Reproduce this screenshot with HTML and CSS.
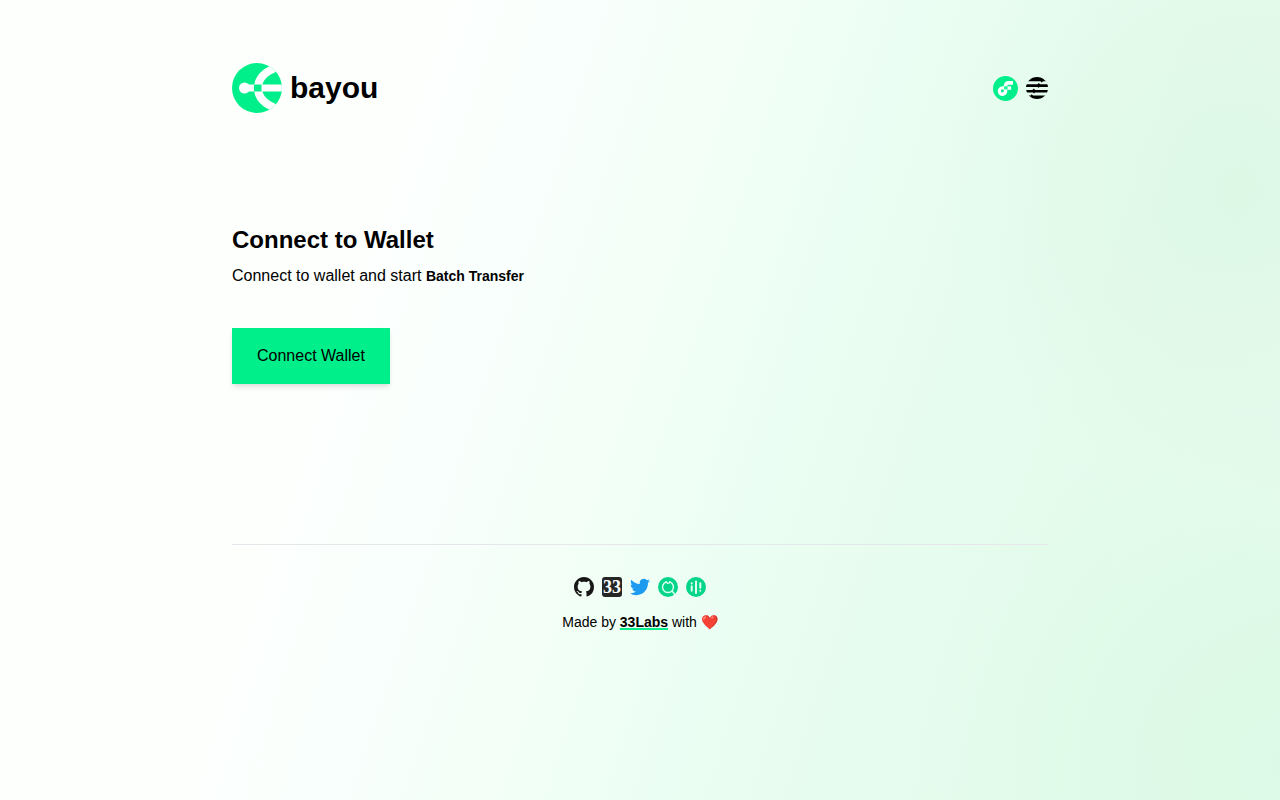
FILE: index.html
```
<!DOCTYPE html>
<html lang="en">

<head>
    <meta charset="UTF-8">
    <meta name="viewport" content="width=device-width, initial-scale=1.0">
    <title>bayou</title>
    <link rel="stylesheet" href="styles.css">
</head>

<body>
    <div class="container">
        <header class="header">
            <a href="#" class="brand">
                <svg class="brand-logo" viewBox="0 0 50 50" aria-hidden="true">
                    <defs>
                        <clipPath id="disc">
                            <circle cx="25" cy="25" r="25" />
                        </clipPath>
                    </defs>
                    <g clip-path="url(#disc)">
                        <rect width="50" height="50" fill="#00ef8b" />
                        <path d="M46 4C34 8 26 15 26 25s8 17 20 21" fill="none" stroke="#fdfffe" stroke-width="8" />
                        <path d="M12 21.5h38v7H12z" fill="#fdfffe" />
                        <circle cx="12.500" cy="25" r="5.500" fill="#fdfffe" />
                        <path d="M22 21.500h7.500v7H22z" fill="#00ef8b" />
                    </g>
                </svg>
                <h1>bayou</h1>
            </a>
            <nav class="chains">
                <a href="#" aria-label="Flow">
                    <svg class="flow" viewBox="0 0 101 101">
                        <circle cx="50.500" cy="50.500" r="50.500" fill="#00ef8b" />
                        <path d="M57.800 41.900h15.600v13.800H57.800z" fill="#fff" />
                        <path d="M43.700 61a6 6 0 1 1-6-6.500h8.300V41.900h-8.300A19.500 19.500 0 1 0 57.800 61v-7.300H43.700z" fill="#fff" />
                        <path d="M63.200 35h17.500V20.500H63.200A18 18 0 0 0 43.500 38.200v4.500h14.300v-3.500a5 5 0 0 1 5.400-4.200z" fill="#fff" />
                        <path d="M46 42.200h11.800v11.500H46z" fill="#16ff99" />
                    </svg>
                </a>
                <a href="#" aria-label="Aptos">
                    <svg class="aptos" viewBox="0 0 22 22">
                        <defs>
                            <clipPath id="ball">
                                <circle cx="11" cy="11" r="11" />
                            </clipPath>
                        </defs>
                        <g clip-path="url(#ball)">
                            <path d="M0 0h22v4.300h-5l-1.200 1.300-1.300-1.300H0zM0 7.200h11.500l1.300-1.300 1.300 1.300H22v2.700h-8.500l-1 .8-1-.8H0zM0 12.900h6.500l1.300-1.300 1.300 1.300H22v2.700H9l-1 1-1-1H0zM0 18.500h4.500l1.200-1.200 1.300 1.200H22V22H0z" />
                        </g>
                    </svg>
                </a>
            </nav>
        </header>

        <main class="main">
            <h2>Connect to Wallet</h2>
            <p>Connect to wallet and start <strong>Batch Transfer</strong></p>
            <button type="button" class="connect">Connect Wallet</button>
        </main>

        <footer class="footer">
            <div class="links">
                <a href="#" aria-label="GitHub">
                    <svg viewBox="0 0 16 16" fill="#181717">
                        <path d="M8 0C3.580 0 0 3.580 0 8c0 3.540 2.290 6.530 5.470 7.590.4.070.55-.17.55-.38 0-.19-.01-.82-.01-1.490-2.010.37-2.530-.49-2.690-.94-.09-.23-.48-.94-.82-1.130-.28-.15-.68-.52-.01-.53.63-.01 1.080.58 1.230.82.72 1.210 1.870.87 2.330.66.07-.52.28-.87.51-1.070-1.780-.2-3.640-.89-3.640-3.950 0-.87.31-1.590.82-2.150-.08-.2-.36-1.020.08-2.120 0 0 .67-.21 2.200.82.64-.18 1.320-.27 2-.27s1.360.09 2 .27c1.530-1.040 2.200-.82 2.200-.82.44 1.100.16 1.920.08 2.120.51.56.82 1.270.82 2.150 0 3.070-1.870 3.750-3.650 3.950.29.25.54.73.54 1.480 0 1.070-.01 1.930-.01 2.200 0 .21.15.46.55.38A8.010 8.010 0 0 0 16 8c0-4.420-3.580-8-8-8z" />
                    </svg>
                </a>
                <a href="#" aria-label="33Labs">
                    <svg viewBox="0 0 20 20">
                        <rect width="20" height="20" rx="3" fill="#262626" />
                        <text class="labs-mark" x="10" y="16" text-anchor="middle">33</text>
                    </svg>
                </a>
                <a href="#" aria-label="Twitter">
                    <svg viewBox="0 0 24 24" fill="#1d9bf0">
                        <path d="M23.950 4.570a10 10 0 0 1-2.820.77 4.960 4.960 0 0 0 2.160-2.720c-.95.55-2 .96-3.130 1.180a4.920 4.920 0 0 0-8.380 4.480C7.690 8.100 4.070 6.130 1.640 3.160a4.820 4.820 0 0 0-.67 2.480c0 1.710.87 3.210 2.190 4.100a4.900 4.900 0 0 1-2.230-.62v.06a4.920 4.920 0 0 0 3.950 4.830 5 5 0 0 1-2.210.08 4.940 4.940 0 0 0 4.600 3.420A9.870 9.870 0 0 1 0 19.540a13.990 13.990 0 0 0 7.550 2.210c9.050 0 14-7.500 14-13.980 0-.21 0-.42-.02-.63a9.940 9.940 0 0 0 2.460-2.550z" />
                    </svg>
                </a>
                <a href="#" aria-label="Search">
                    <svg viewBox="0 0 20 20">
                        <circle cx="10" cy="10" r="10" fill="#04d58b" />
                        <g fill="none" stroke="#dcfff0" stroke-width="1.500" stroke-linecap="round">
                            <path d="M8.200 4.900a5.500 5.500 0 1 0 3.600 0" />
                            <path d="M8.200 4.900l1.300 1.300M11.800 4.900l-.8 1.300M14.200 14.300l2.600 3" />
                        </g>
                    </svg>
                </a>
                <a href="#" aria-label="Stats">
                    <svg viewBox="0 0 20 20">
                        <circle cx="10" cy="10" r="10" fill="#04d58b" />
                        <g stroke="#e4fff4" stroke-width="2" stroke-linecap="round">
                            <path d="M5.700 9.300v4.500M5.700 6.300v.1M10 4.500v11.500M14.300 6.300v4.500M14.300 13.700v.1" />
                        </g>
                    </svg>
                </a>
            </div>
            <p>Made by <a href="#" class="labs">33Labs</a> with ❤️</p>
        </footer>
    </div>
</body>

</html>
```
FILE: styles.css
```
* {
    box-sizing: border-box;
}

body {
    margin: 0;
    min-height: 100vh;
    font-family: "Liberation Sans", Arial, sans-serif;
    font-size: 16px;
    line-height: 24px;
    color: #000;
    background:
        radial-gradient(circle at 97% 24%, rgba(219, 249, 229, 0.8), rgba(222, 247, 230, 0.5) 10%, rgba(228, 249, 235, 0) 22%),
        radial-gradient(circle at 102% 96%, rgba(219, 250, 230, 1), rgba(220, 250, 230, 0.8) 10%, rgba(226, 250, 234, 0) 26%),
        linear-gradient(108deg, #fdfffd 0%, #fdfffd 28%, #f8fffc 39%, #f3fff7 48%, #ebfef3 60%, #e6fcee 72%, #e4fbeb 82%, #e8faee 100%);
}

h1,
h2,
p {
    margin: 0;
}

svg {
    display: block;
}

.container {
    max-width: 880px;
    margin: 0 auto;
    padding: 48px 32px;
}

.header {
    display: flex;
    justify-content: space-between;
    align-items: center;
    height: 80px;
}

.brand {
    display: flex;
    align-items: center;
    gap: 8px;
    color: #000;
    text-decoration: none;
}

.brand-logo {
    width: 50px;
    height: 50px;
}

h1 {
    font-size: 30px;
    line-height: 36px;
}

.chains {
    display: flex;
    align-items: center;
    gap: 8px;
}

.flow {
    width: 25px;
    height: 25px;
}

.aptos {
    width: 22px;
    height: 22px;
}

.main {
    padding: 96px 0 160px;
}

h2 {
    font-size: 24px;
    line-height: 32px;
    margin-bottom: 8px;
}

.main strong {
    font-size: 14px;
}

.connect {
    height: 56px;
    margin-top: 40px;
    padding: 0 25px;
    border: none;
    background-color: #00ef8b;
    color: #000;
    font-family: inherit;
    font-size: 16px;
    cursor: pointer;
    display: block;
    box-shadow: 0 4px 6px -1px rgba(0, 0, 0, 0.1), 0 2px 4px -1px rgba(0, 0, 0, 0.06);
}

.connect:hover {
    background-color: #00d97e;
}

.footer {
    padding-top: 32px;
    border-top: 1px solid #e5e7eb;
    text-align: center;
    font-size: 14px;
    line-height: 20px;
}

.links {
    display: flex;
    justify-content: center;
    gap: 8px;
    margin-bottom: 15px;
}

.links svg {
    width: 20px;
    height: 20px;
}

.labs-mark {
    font-family: "Liberation Serif", serif;
    font-size: 18px;
    font-weight: bold;
    fill: #fff;
}

.labs {
    color: #000;
    font-weight: bold;
    text-decoration: underline #00ef8b 2px;
    text-underline-offset: 1px;
}
```
